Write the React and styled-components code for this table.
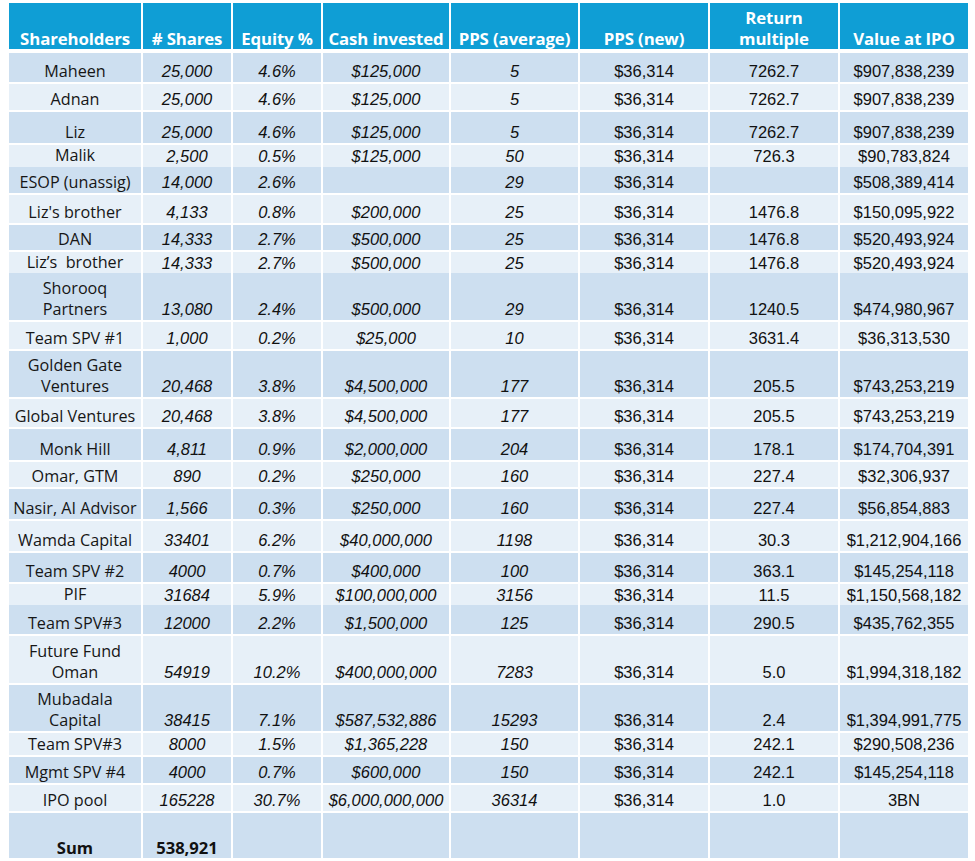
import React from 'react';
import styled, { createGlobalStyle } from 'styled-components';

const GlobalStyle = createGlobalStyle`
  html, body {
    margin: 0;
    padding: 0;
    background: #ffffff;
  }
`;

const COLUMNS = '132px 88px 88px 126px 127px 128px 128px 128px';

const headers = [
  'Shareholders',
  '# Shares',
  'Equity %',
  'Cash invested',
  'PPS (average)',
  'PPS (new)',
  'Return\nmultiple',
  'Value at IPO'
];

const rows = [
  { h: 29, name: 'Maheen', shares: '25,000', equity: '4.6%', cash: '$125,000', avg: '5', pps: '$36,314', mult: '7262.7', value: '$907,838,239' },
  { h: 26, name: 'Adnan', shares: '25,000', equity: '4.6%', cash: '$125,000', avg: '5', pps: '$36,314', mult: '7262.7', value: '$907,838,239' },
  { h: 31, name: 'Liz', shares: '25,000', equity: '4.6%', cash: '$125,000', avg: '5', pps: '$36,314', mult: '7262.7', value: '$907,838,239' },
  { h: 20, name: 'Malik', shares: '2,500', equity: '0.5%', cash: '$125,000', avg: '50', pps: '$36,314', mult: '726.3', value: '$90,783,824' },
  { h: 26, name: 'ESOP (unassig)', shares: '14,000', equity: '2.6%', cash: '', avg: '29', pps: '$36,314', mult: '', value: '$508,389,414' },
  { h: 28, name: "Liz's brother", shares: '4,133', equity: '0.8%', cash: '$200,000', avg: '25', pps: '$36,314', mult: '1476.8', value: '$150,095,922' },
  { h: 25, name: 'DAN', shares: '14,333', equity: '2.7%', cash: '$500,000', avg: '25', pps: '$36,314', mult: '1476.8', value: '$520,493,924' },
  { h: 19, name: 'Liz\u2019s  brother', shares: '14,333', equity: '2.7%', cash: '$500,000', avg: '25', pps: '$36,314', mult: '1476.8', value: '$520,493,924' },
  { h: 47, name: 'Shorooq\nPartners', shares: '13,080', equity: '2.4%', cash: '$500,000', avg: '29', pps: '$36,314', mult: '1240.5', value: '$474,980,967' },
  { h: 27, name: 'Team SPV #1', shares: '1,000', equity: '0.2%', cash: '$25,000', avg: '10', pps: '$36,314', mult: '3631.4', value: '$36,313,530' },
  { h: 46, name: 'Golden Gate\nVentures', shares: '20,468', equity: '3.8%', cash: '$4,500,000', avg: '177', pps: '$36,314', mult: '205.5', value: '$743,253,219' },
  { h: 28, name: 'Global Ventures', shares: '20,468', equity: '3.8%', cash: '$4,500,000', avg: '177', pps: '$36,314', mult: '205.5', value: '$743,253,219' },
  { h: 31, name: 'Monk Hill', shares: '4,811', equity: '0.9%', cash: '$2,000,000', avg: '204', pps: '$36,314', mult: '178.1', value: '$174,704,391' },
  { h: 25, name: 'Omar, GTM', shares: '890', equity: '0.2%', cash: '$250,000', avg: '160', pps: '$36,314', mult: '227.4', value: '$32,306,937' },
  { h: 30, name: 'Nasir, AI Advisor', shares: '1,566', equity: '0.3%', cash: '$250,000', avg: '160', pps: '$36,314', mult: '227.4', value: '$56,854,883' },
  { h: 30, name: 'Wamda Capital', shares: '33401', equity: '6.2%', cash: '$40,000,000', avg: '1198', pps: '$36,314', mult: '30.3', value: '$1,212,904,166' },
  { h: 29, name: 'Team SPV #2', shares: '4000', equity: '0.7%', cash: '$400,000', avg: '100', pps: '$36,314', mult: '363.1', value: '$145,254,118' },
  { h: 19, name: 'PIF', shares: '31684', equity: '5.9%', cash: '$100,000,000', avg: '3156', pps: '$36,314', mult: '11.5', value: '$1,150,568,182' },
  { h: 29, name: 'Team SPV#3', shares: '12000', equity: '2.2%', cash: '$1,500,000', avg: '125', pps: '$36,314', mult: '290.5', value: '$435,762,355' },
  { h: 47, name: 'Future Fund\nOman', shares: '54919', equity: '10.2%', cash: '$400,000,000', avg: '7283', pps: '$36,314', mult: '5.0', value: '$1,994,318,182' },
  { h: 46, name: 'Mubadala\nCapital', shares: '38415', equity: '7.1%', cash: '$587,532,886', avg: '15293', pps: '$36,314', mult: '2.4', value: '$1,394,991,775' },
  { h: 22, name: 'Team SPV#3', shares: '8000', equity: '1.5%', cash: '$1,365,228', avg: '150', pps: '$36,314', mult: '242.1', value: '$290,508,236' },
  { h: 26, name: 'Mgmt SPV #4', shares: '4000', equity: '0.7%', cash: '$600,000', avg: '150', pps: '$36,314', mult: '242.1', value: '$145,254,118' },
  { h: 26, name: 'IPO pool', shares: '165228', equity: '30.7%', cash: '$6,000,000,000', avg: '36314', pps: '$36,314', mult: '1.0', value: '3BN' }
];

function CapTable() {
  return (
    <Table>
      <HeaderRow>
        {headers.map((h) => (
          <HeaderCell key={h}>{h}</HeaderCell>
        ))}
      </HeaderRow>
      {rows.map((r, i) => {
        const dark = i % 2 === 0;
        return (
          <Row key={i} $h={r.h}>
            <NameCell $dark={dark}>{r.name}</NameCell>
            <NumCell $dark={dark} $italic>{r.shares}</NumCell>
            <NumCell $dark={dark} $italic>{r.equity}</NumCell>
            <NumCell $dark={dark} $italic>{r.cash}</NumCell>
            <NumCell $dark={dark} $italic>{r.avg}</NumCell>
            <NumCell $dark={dark}>{r.pps}</NumCell>
            <NumCell $dark={dark}>{r.mult}</NumCell>
            <NumCell $dark={dark}>{r.value}</NumCell>
          </Row>
        );
      })}
      <Row $h={45}>
        <SumCell $dark>Sum</SumCell>
        <SumCell $dark>538,921</SumCell>
        <NumCell $dark />
        <NumCell $dark />
        <NumCell $dark />
        <NumCell $dark />
        <NumCell $dark />
        <NumCell $dark />
      </Row>
    </Table>
  );
}

export default function App() {
  return (
    <>
      <GlobalStyle />
      <Page>
        <CapTable />
      </Page>
    </>
  );
}

const Page = styled.div`
  padding: 3px 0 0 9px;
  width: 975px;
  height: 861px;
  box-sizing: border-box;
  overflow: hidden;
`;

const Table = styled.div`
  display: flex;
  flex-direction: column;
  gap: 2px;
  width: 959px;
`;

const Row = styled.div`
  display: grid;
  grid-template-columns: ${COLUMNS};
  column-gap: 2px;
  height: ${(p) => p.$h}px;
`;

const HeaderRow = styled(Row)`
  height: 46px;
  margin-bottom: 2px;
`;

const HeaderCell = styled.div`
  background: #0f9ed5;
  color: #ffffff;
  font-family: 'Open Sans', 'Liberation Sans', sans-serif;
  font-weight: 700;
  font-size: 16.8px;
  line-height: 21px;
  white-space: pre;
  text-align: center;
  display: flex;
  align-items: flex-end;
  justify-content: center;
  letter-spacing: -0.1px;
`;

const Cell = styled.div`
  background: ${(p) => (p.$dark ? '#cddff0' : '#e7f0f8')};
  display: flex;
  align-items: flex-end;
  justify-content: center;
  text-align: center;
  white-space: pre;
  overflow: visible;
  color: #111111;
`;

const NameCell = styled(Cell)`
  font-family: 'Open Sans', 'Liberation Sans', sans-serif;
  font-size: 16.2px;
  line-height: 21px;
  padding-bottom: 0.5px;
  color: #161616;
`;

const NumCell = styled(Cell)`
  font-family: 'Liberation Sans', Arial, sans-serif;
  font-size: 16.5px;
  line-height: 19px;
  font-style: ${(p) => (p.$italic ? 'italic' : 'normal')};
  padding-bottom: 1px;
`;

const SumCell = styled(Cell)`
  font-family: 'Open Sans', 'Liberation Sans', sans-serif;
  font-weight: 700;
  font-size: 16.6px;
  line-height: 21px;
  color: #111111;
`;
